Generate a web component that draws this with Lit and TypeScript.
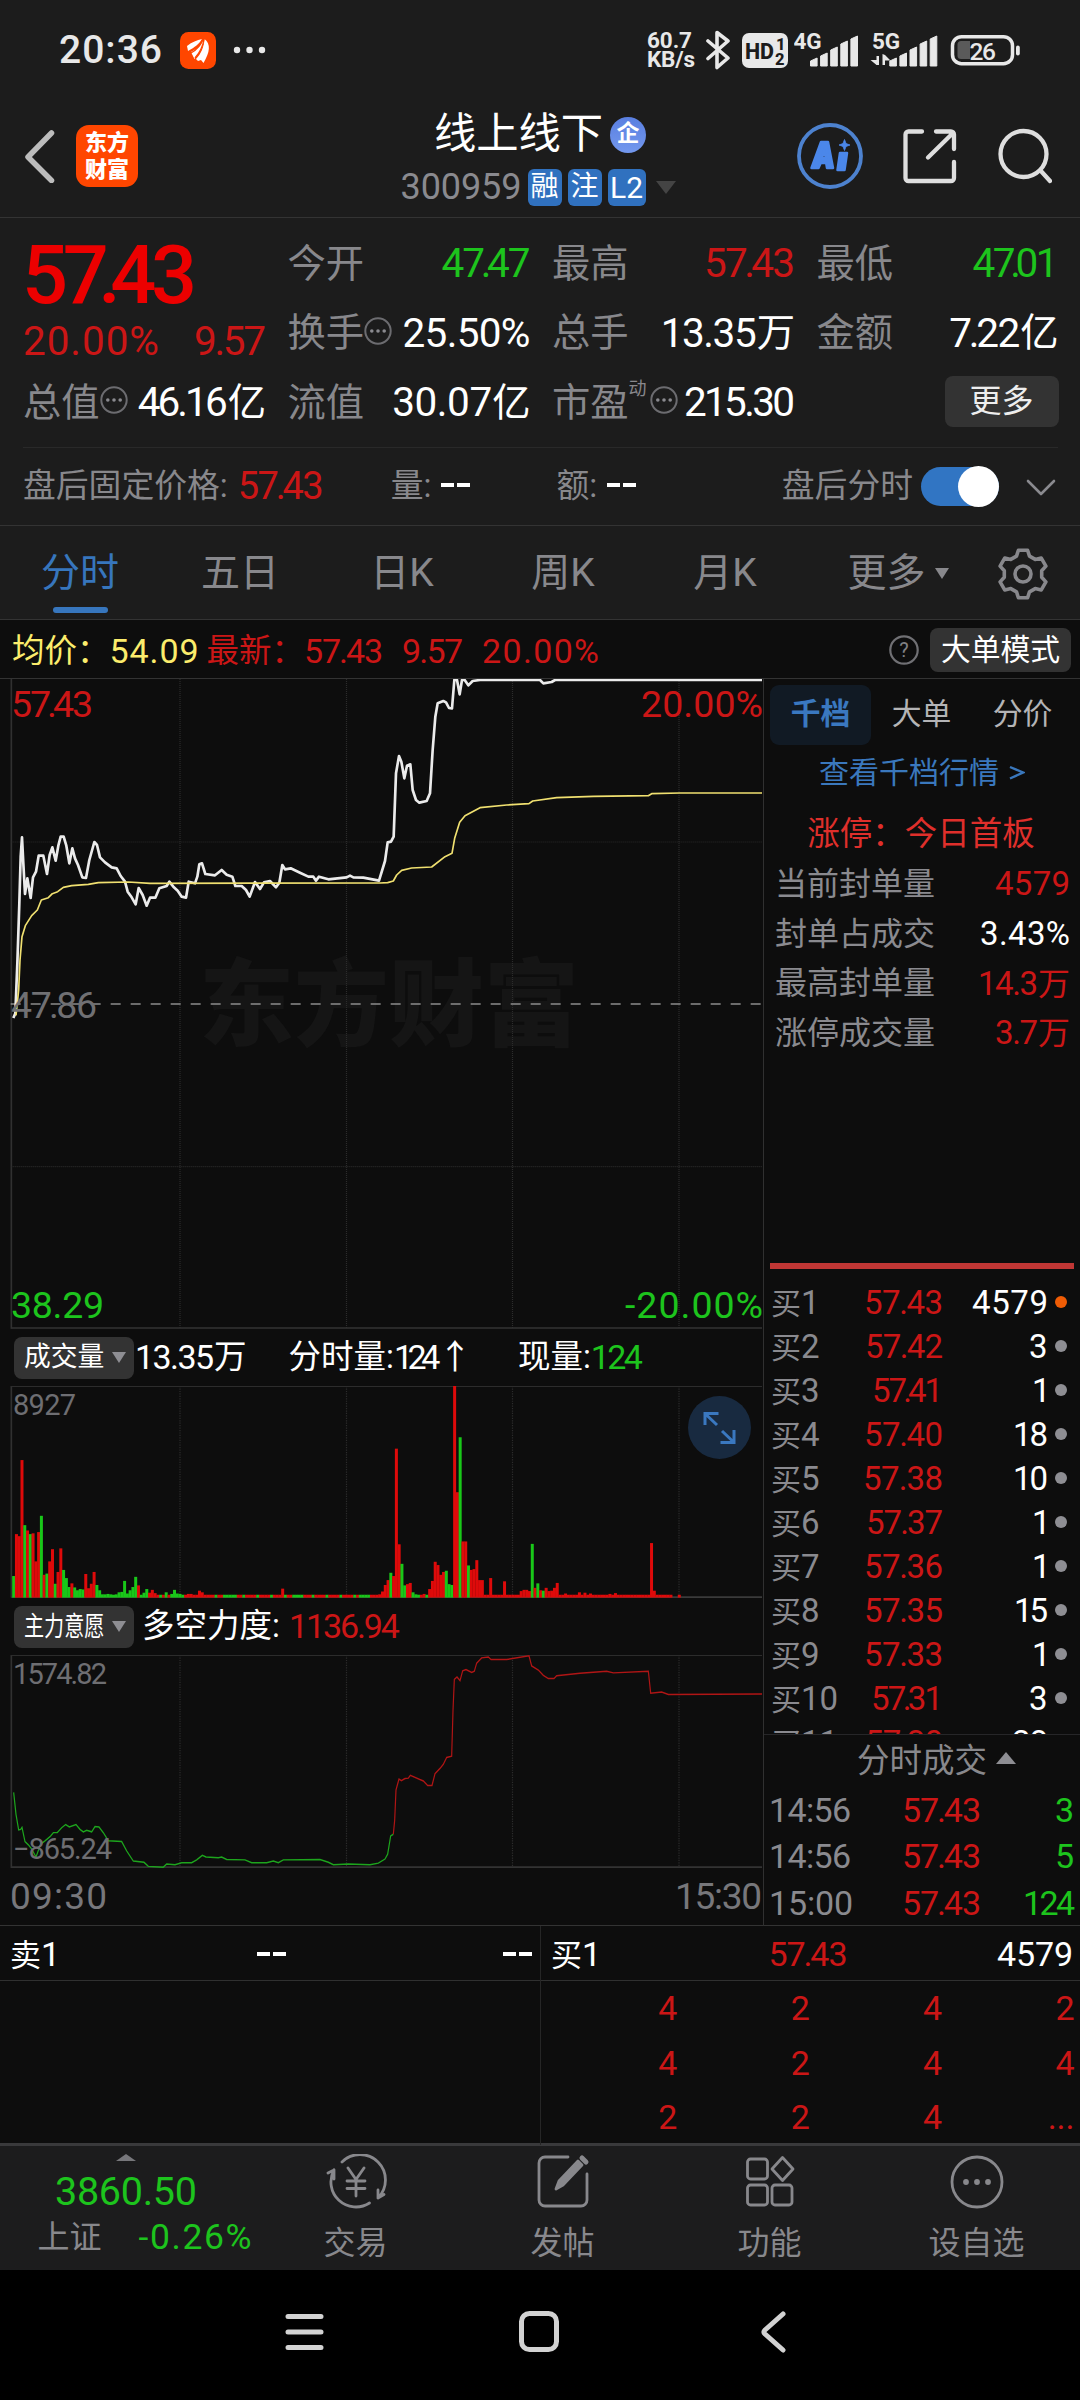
import { LitElement, html, svg, css } from "lit";
import { customElement, property, query } from "lit/decorators.js";

/** A single line of text whose glyphs are tracked to span a given width. */
@customElement("fit-text")
class FitText extends LitElement {
  @property() text = "";
  @property({ type: Number }) w = 0;
  @query(".run") run!: HTMLElement;

  static styles = css`
    :host { display: inline-block; flex: none; white-space: nowrap; text-align: left; }
    .run { display: inline-block; }
  `;

  updated() {
    const parts = Array.from(this.run.children) as HTMLElement[];
    parts.forEach((p) => (p.style.letterSpacing = "0"));
    const diff = this.w - this.run.getBoundingClientRect().width;
    const weightOf = (p: HTMLElement) => (diff < 0 && p.className === "pair" ? 2 : 1);
    let total = -1;
    parts.forEach((p) => (total += (p.textContent || "").length * weightOf(p)));
    const unit = diff / Math.max(total, 1);
    parts.forEach((p) => (p.style.letterSpacing = unit * weightOf(p) + "px"));
    this.style.width = this.w + "px";
  }

  render() {
    const i = this.text.indexOf("7.");
    return i < 0
      ? html`<span class="run"><span>${this.text}</span></span>`
      : html`<span class="run"><span>${this.text.slice(0, i)}</span><span class="pair">7.</span><span>${this.text.slice(i + 2)}</span></span>`;
  }
}

const fit = (text: string, w: number, cls = "") => html`<fit-text class=${cls} .text=${text} .w=${w}></fit-text>`;

const pts = (a: number[], dx = 0) => {
  const out: string[] = [];
  for (let i = 0; i < a.length; i += 2) out.push(a[i] + dx + "," + a[i + 1]);
  return out.join(" ");
};

const PRICE_A = [40,1044,46,1030,52,880,58,700,62,560,66,502,70,580,75,672,82,625,92,684,99,622,108,605,116,557,130,557,141,612,149,555,157,532,167,572,175,527,182,500,191,500,199,527,208,580,217,535,225,565,234,585,247,622,258,624,268,570,283,516,291,525,300,562,315,577,335,592,350,595,362,618,375,635,383,665,395,682,407,703,416,654,428,675,440,707,450,683,466,683,478,655,500,648,508,635,520,650,533,662,545,680,558,683,566,635,585,640,592,620,598,583,606,580,616,612,645,616,665,600,680,614,697,620,706,648,725,648,738,660,749,680,765,636,780,657,792,637,810,633,828,652,838,638,847,585,855,598,872,595,900,608,925,620,940,620,948,632,957,620,985,628,1040,622,1050,617,1060,622,1090,623,1137,632,1155,573,1163,517,1173,515,1181,500,1188,310];
const PRICE_B = [57,258,64,275,73,325,81,287,91,283,98,360,108,390,118,398,140,393,150,370,158,240,166,140,173,100,190,93,198,97,207,114,216,115,223,30,231,30,239,73,246,30,254,30,265,46,278,33,300,30,480,30,490,40,515,36,525,30,1146,30];
const AVG_A = [48,1036,56,960,60,870,66,800,76,767,95,737,112,720,124,690,145,683,157,671,173,665,190,652,215,647,265,643,295,638,385,636,450,640,1140,639,1163,638];
const AVG_B = [40,633,50,615,65,601,95,594,155,591,195,560,216,550,224,505,239,457,255,437,300,413,380,405,447,401,458,393,530,383,640,379,805,377,815,371,900,369,1146,369];
const WILL_G = [41,1281,48,1335,56,1373,62,1372,66,1367,75,1402,85,1410,95,1420,108,1440,122,1408,135,1400,150,1390,160,1380,172,1380,185,1368,197,1360,208,1366,228,1360,240,1372,250,1378,260,1374,275,1378,285,1365,297,1366,310,1380,325,1400,365,1402,380,1425,400,1450,432,1453,445,1463,490,1465,500,1457,525,1459,545,1454,575,1454,590,1447,607,1436,618,1440,655,1442,665,1440,680,1446,735,1447,755,1454,800,1454,820,1450,835,1454,850,1447,960,1446,985,1453,1000,1459,1045,1457,1110,1459,1135,1455,1155,1445,1163,1433,1172,1388,1180,1384];
const WILL_R = [40,1384,44,1350,48,1275,57,1248,64,1252,75,1247,85,1246,91,1239,130,1253,143,1264,156,1264,165,1235,180,1222,190,1212,200,1195,215,1192,219,1080,223,1003,231,997,240,1006,248,982,258,979,275,986,283,983,290,963,305,950,325,948,333,954,380,954,447,945,455,970,475,980,490,993,505,1001,522,1001,530,994,600,988,680,983,700,987,805,983,812,1037,845,1034,865,1040,1146,1039];

/* Volume per minute: "<minute><r|g><top>", every other minute is a minimal bar. */
const VOL = "0g750 1r647 2r652 3r465 4g625 5r638 6g647 7r645 8r714 9r642 10g602 11r747 12g744 13r714 14r684 15g769 16r740 17r682 18g735 19g755 20g777 21r768 22g778 23g785 24g782 25g783 26r745 27r780 28r769 29r740 30g772 31g785 32g795 33g795 34g794 35g795 36g796 37g795 38g790 39g789 40g762 41g793 42g785 43g777 44g752 45r773 46g796 47g791 48g782 49r791 50r784 51r792 55g790 56r796 57g794 58g784 59g793 60g794 61g796 63r794 64r794 67r786 68r790 97r781 132r795 133r788 134r772 135r760 136g742 137r750 138r437 139r672 140g720 141g773 142r770 143r767 144g790 145g795 146g796 147r796 148r794 149g796 150r782 151r762 152r715 153r723 154r747 155r740 156g737 157g770 158g772 159r283 160r544 161g409 162r665 163r665 164g724 165r735 166r733 167r711 168r760 169r760 172r755 177r763 183r787 184r784 185r784 186r787 187g671 188r779 189g768 190r785 191g786 192r779 193r787 194r786 195r779 196r767 199r793 204r790 206r791 208r793 215r794 217r792 230r669 231r786";
const bars = (() => {
  const map = new Map<number, [string, number]>();
  VOL.split(" ").forEach((s) => {
    const m = /^(\d+)([rg])(\d+)$/.exec(s)!;
    map.set(+m[1], [m[2], +m[3]]);
  });
  const list: { x: number; y: number; up: boolean }[] = [];
  for (let i = 0; i <= 240; i++) {
    if (i > 237 && i < 240) continue;
    const v = map.get(i);
    const up = v ? v[0] === "r" : i > 140 || !(i % 5 === 3 || (i > 75 && i < 81) || (i > 100 && i < 105) || (i > 124 && i < 129));
    list.push({ x: 36.5 + 8.32 * i, y: v ? v[1] : 796, up });
  }
  return list;
})();

const gear = (() => {
  const p: string[] = [];
  for (let k = 0; k < 6; k++)
    for (const [d, r] of [[-20, 19], [-11, 24.2], [11, 24.2], [20, 19]]) {
      const a = ((k * 60 + d) * Math.PI) / 180;
      p.push((26 + r * Math.sin(a)).toFixed(1) + "," + (26 - r * Math.cos(a)).toFixed(1));
    }
  return p.join(" ");
})();

const dotsIcon = html`<svg class="dots" width="28" height="28" viewBox="0 0 28 28"><circle cx="14" cy="14" r="12.7" fill="none" stroke="#6c6c70" stroke-width="2"/><circle cx="7.8" cy="14" r="1.8"/><circle cx="14" cy="14" r="1.8"/><circle cx="20.2" cy="14" r="1.8"/></svg>`;

const BIDS: [string, string, number, string, number][] = [
  ["买1", "57.43", 79, "4579", 76], ["买2", "57.42", 78, "3", 19], ["买3", "57.41", 71, "1", 16],
  ["买4", "57.40", 79, "18", 35], ["买5", "57.38", 80, "10", 35], ["买6", "57.37", 77, "1", 16],
  ["买7", "57.36", 79, "1", 16], ["买8", "57.35", 79, "15", 34], ["买9", "57.33", 79, "1", 16],
  ["买10", "57.31", 72, "3", 19], ["买11", "57.30", 78, "28", 36],
];

@customElement("app-root")
class AppRoot extends LitElement {
  static styles = css`
    :host { display: block; width: 1080px; height: 2400px; overflow: hidden; background: #0d0d0d; color: #fff;
      font-family: Roboto, "Noto Sans CJK SC", sans-serif; font-size: 33px; line-height: 1.2; }
    * { box-sizing: border-box; }
    svg { display: block; flex: none; }
    .g { color: #8a8a8f; } .red { color: #cb1616; } .green { color: #1dc41d; } .w { color: #fff; } .yel { color: #fbec6c; } .blue { color: #3a78bd; }
    .top { background: #1c1c1c; }
    .status { height: 104px; display: flex; align-items: flex-start; justify-content: space-between; padding: 0 60px 0 59px; }
    .st-left { display: flex; align-items: center; height: 100px; color: #e8e8e8; }
    .clock { font-size: 39px; font-weight: 500; margin-right: 18px; padding-top: 1px; }
    .st-left svg + svg { margin-left: 17px; }
    .st-right { display: flex; align-items: center; height: 100px; color: #e8e8e8; }
    .speed { display: flex; flex-direction: column; font-size: 22.5px; line-height: 19px; font-weight: 700; width: 50px; margin-right: 9px; }
    .hd { margin: 0 6px 0 12px; }
    .header { height: 113px; display: grid; grid-template-columns: 1fr auto 1fr; }
    .h-left { display: flex; align-items: center; height: 104px; padding-left: 22px; }
    .logo { width: 62px; height: 62px; border-radius: 13px; background: #ff4600; margin-left: 20px; font-weight: 900; font-size: 22px; line-height: 27px; display: flex; flex-direction: column; align-items: center; justify-content: center; }
    .h-mid { display: flex; flex-direction: column; align-items: center; padding-top: 1.5px; }
    .title { display: flex; align-items: center; height: 58px; font-size: 42.3px; }
    .badge { width: 36px; height: 36px; border-radius: 50%; background: linear-gradient(#5a7fe0, #7398ee); font-size: 23px; font-weight: 700; display: flex; align-items: center; justify-content: center; margin-left: 7px; padding-bottom: 1px; }
    .code { display: flex; align-items: center; height: 48px; font-size: 36px; margin-right: 4px; }
    .chip { height: 37px; border-radius: 6px; background: #3071bf; color: #fff; font-size: 28px; line-height: 36px; text-align: center; margin-left: 6px; width: 34px; }
    .chip.l2 { width: 38px; font-size: 30px; line-height: 38px; }
    .tri { width: 0; height: 0; border: 10px solid transparent; border-bottom: 0; border-top: 13px solid #444; margin-left: 10px; }
    .h-right { display: flex; align-items: center; justify-content: flex-end; height: 104px; padding-right: 28px; }
    .share { margin: 0 40px 0 39px; }
    .quote { border-top: 1.5px solid #333; height: 308px; padding: 10px 22px 0 23px; }
    .grid { display: grid; grid-template-columns: repeat(3, 243px) 242px; column-gap: 21.5px; grid-auto-rows: 69.5px; }
    .cell { display: flex; align-items: center; font-size: 38.3px; padding-top: 1.5px; }
    .cell .lab, .after .g { color: #88888c; }
    .cell .val, .cell fit-text { margin-left: auto; }
    .cell fit-text { font-size: 40.5px; }
    .big { grid-row: span 2; display: flex; flex-direction: column; }
    .big .price { font-size: 81px; font-weight: 500; color: #ec0000; height: 84px; line-height: 95px; margin-left: -1px; }
    .pct { display: flex; justify-content: space-between; font-size: 40.5px; height: 64px; align-items: center; margin-top: 3px; }
    .dots { margin-bottom: 5px; fill: #8a8a8f; }
    .sup { font-size: 18px; align-self: flex-start; margin-top: 9px; margin-right: 2px; color: #88888c; width: 19px; }
    .btn { background: #333; border-radius: 8px; color: #fff; display: flex; align-items: center; justify-content: center; }
    .more { width: 114px; height: 51px; margin-left: auto; font-size: 32px; color: #eee; margin-bottom: 2px; }
    .after { border-top: 1.5px solid #292929; display: flex; align-items: center; height: 79px; font-size: 32.8px; margin-top: 10px; padding-right: 2px; }
    .after fit-text { font-size: 38px; }
    .dash { display: inline-flex; gap: 3px; } .dash i { width: 13px; height: 3.5px; background: #fff; }
    .a1 { margin-left: 10px; } .a2 { margin-left: 67px; } .a3 { margin-left: 86px; } .a4 { margin-left: auto; } .dash.d { margin-left: 10px; margin-bottom: 3px; }
    .toggle { width: 78px; height: 39px; border-radius: 20px; background: #3175c3; margin: 0 27px 0 8px; display: flex; justify-content: flex-end; align-items: center; }
    .toggle i { width: 41px; height: 41px; border-radius: 50%; background: #fff; }
    .tabs { border-top: 1.5px solid #333; border-bottom: 1.5px solid #333; height: 95px; display: grid; grid-template-columns: 160px 160px 164px 158px 166px 180px 70px; font-size: 39px; color: #88888c; }
    .tab { display: flex; align-items: center; justify-content: center; position: relative; padding-top: 2px; }
    .tab.on { color: #3776bd; }
    .tab.on::after { content: ""; position: absolute; left: 53px; bottom: 6px; width: 55px; height: 6px; border-radius: 3px; background: #3776bd; }
    .tab .t { border: 7px solid transparent; border-bottom: 0; border-top: 11px solid #88888c; margin-left: 9px; }
    .info { height: 58px; display: flex; align-items: center; padding: 5px 9px 0 12px; font-size: 32.5px; }
    .info fit-text { font-size: 34px; }
    .q { margin-left: auto; margin-bottom: 3px; }
    .mode { width: 141px; height: 44px; font-size: 29.8px; margin-left: 11px; margin-bottom: 4px; }
    .body { display: grid; grid-template-columns: 764px 316px; height: 1247px; border-top: 1.5px solid #333; }
    .left { border-right: 1.5px solid #303030; }
    .plot { position: relative; }
    .plot.p1 { height: 650px; } .plot.p2 { height: 212px; } .plot.p3 { height: 213px; }
    .plot .lines { position: relative; }
    .over { position: absolute; line-height: 34px; }
    .tl { left: 11px; top: 8px; } .tr { right: 0; top: 8px; } .ml { left: 11px; top: 309px; color: #707073; } .bl { left: 11px; bottom: 7px; } .br { right: 0; bottom: 7px; }
    .p1 .over { font-size: 37.5px; }
    .mark { position: absolute; left: 199px; top: 253px; font-size: 95px; font-weight: 900; line-height: 150px; color: #151515; }
    .p2 .over, .p3 .over { font-size: 29px; color: #6e6e72; }
    .v1 { left: 13px; top: 2px; } .v2 { left: 13px; bottom: 2px; }
    .expand { position: absolute; left: 688px; top: 10px; }
    .sub { height: 57px; display: flex; align-items: center; padding-left: 14px; font-size: 32.5px; }
    .sub fit-text { font-size: 34px; }
    .pick { width: 120px; height: 42px; font-size: 26.8px; justify-content: flex-start; padding-left: 10px; }
    .pick .cond { display: inline-block; width: 80px; }
    .pick .cond b { display: inline-block; font-weight: 400; font-size: 27.5px; transform: scaleX(.73); transform-origin: left; white-space: nowrap; }
    .pick .t { border: 7px solid transparent; border-bottom: 0; border-top: 11px solid #8e8e93; margin-left: 8px; }
    .time { height: 57px; display: flex; justify-content: space-between; align-items: center; padding: 2px 1px 0 10px; font-size: 37px; color: #77777b; }
    .side { display: flex; flex-direction: column; }
    .stabs { display: flex; margin: 6px 0 0 6px; height: 60px; font-size: 29.8px; color: #b4b4b6; }
    .stabs div { width: 101px; display: flex; align-items: center; justify-content: center; padding-bottom: 2px; }
    .stabs .on { background: #111a24; border-radius: 9px; color: #3a78c0; font-weight: 700; }
    .link { height: 56px; display: flex; align-items: center; justify-content: center; font-size: 30px; color: #3a78bd; gap: 10px; }
    .limit { margin-top: 8px; height: 50px; line-height: 50px; text-align: center; font-size: 32.5px; color: #df2f2b; padding-right: 2px; }
    .stat { height: 49.8px; display: flex; align-items: center; justify-content: space-between; padding: 0 10px 0 11px; font-size: 32px; }
    .stat .v { font-size: 33px; }
    .line { height: 6px; margin: 205px 6px 0 6px; background: #c03735; }
    .bids { height: 465px; padding-top: 12px; overflow: hidden; }
    .bid { height: 44px; display: flex; align-items: center; padding-left: 7px; font-size: 33px; }
    .bid .lab { width: 77px; white-space: nowrap; color: #8a8a8f; } .bid .lab i { font-style: normal; font-size: 30px; }
    .bid .p { width: 95px; text-align: right; } .bid .n { width: 105px; text-align: right; }
    .bid .dot { width: 12px; height: 12px; border-radius: 50%; background: #8e8e93; margin-left: 7px; margin-bottom: 3px; }
    .bid .dot.hot { background: #ef5c05; }
    .ph { height: 53px; border-top: 1.5px solid #262628; display: flex; align-items: center; justify-content: center; font-size: 32.5px; color: #88888c; padding-left: 29px; }
    .ph i { border: 10px solid transparent; border-top: 0; border-bottom: 12px solid #8e8e93; margin-left: 9px; margin-bottom: 6px; }
    .trade { height: 46.4px; display: grid; grid-template-columns: 86px 126px 1fr; align-items: center; text-align: right; padding: 0 5px 0 5px; font-size: 34px; }
    .trade .g { text-align: left; }
    .book { border-top: 1.5px solid #333; height: 221px; display: grid; grid-template-columns: 540px 540px; border-bottom: 3px solid #39393b; }
    .half + .half { border-left: 1.5px solid #262626; }
    .bh { height: 55px; border-bottom: 1.5px solid #303030; display: grid; grid-template-columns: 1fr 1fr 1fr; padding: 2px 8px 0 10px; align-items: center; font-size: 34px; }
    .bh > :nth-child(2) { justify-self: center; } .bh > :nth-child(3) { justify-self: end; }
    .bh .c { font-size: 31px; }
    .half + .half .bh > :nth-child(2) { margin-right: 7px; }
    .half + .half .bh > :nth-child(3) { margin-right: -1px; }
    .queue { display: grid; grid-template-columns: repeat(4, 132.4px); grid-auto-rows: 54.7px; align-items: center; text-align: right; font-size: 34px; margin-left: 4px; }
    .foot { height: 124px; background: #1c1c1d; display: grid; grid-template-columns: 252px repeat(4, 207px); }
    .idx { display: flex; flex-direction: column; align-items: center; }
    .idx .up { border: 10px solid transparent; border-top: 0; border-bottom: 7px solid #77777b; margin-top: 8px; }
    .idx .n { font-size: 39.5px; line-height: 56px; margin-top: 3px; }
    .idx .r { display: flex; align-items: center; justify-content: space-between; width: 214px; margin: -3px 0 0 37px; line-height: 40px; font-size: 32px; color: #88888c; }
    .idx .r fit-text { font-size: 35.5px; }
    .act { display: flex; flex-direction: column; align-items: center; font-size: 32px; line-height: 44px; color: #88888c; padding-top: 8px; }
    .act svg { margin-bottom: 11px; }
    .nav { height: 130px; background: #000; display: flex; align-items: center; justify-content: center; padding: 0 31px 7px 0; }
  `;

  cell(label: string, value: unknown, icon: unknown = "") {
    return html`<div class="cell"><span class="lab">${label}</span>${icon}${value}</div>`;
  }

  grid(y0: number, y1: number) {
    return svg`${[540, 1039.5, 1537.5, 2037].map((x) => svg`<line x1=${x} x2=${x} y1=${y0} y2=${y1} stroke="#2c2c2c" stroke-width="3.6" stroke-dasharray="3 3"/>`)}<line x1="34" x2="34" y1=${y0} y2=${y1} stroke="#303030" stroke-width="5"/>`;
  }

  statusBar() {
    const sig = (x: number) => [58, 53, 47, 41, 36].map((y, i) => svg`<path d=${`M${x + i * 10.1} 66V${y + 3}l6.6-3V66z`} stroke="#e8e8e8" stroke-width="1" stroke-linejoin="round"/>`);
    return html`<div class="status">
      <div class="st-left">
        ${fit("20:36", 103, "clock")}
        <svg width="36" height="37" viewBox="0 0 36 37"><rect width="36" height="37" rx="8.5" fill="#ff4600"/><g fill="#fff"><path d="M7 14c5-4 10-6 15-7-3 5-7 8-14 12z"/><path d="M11 20c6-3 10-7 12.500-13 .6 6-3 12-9 20z" /><path d="M16 27c5-5 8-12 8.500-20C31 12 30 20 23.500 31l-2.500-3-3 1z"/></g><path d="M23 7c-2 6-5 10-12 14M24 7c-1 7-3 12-9 19" fill="none" stroke="#ff4600" stroke-width="1.300"/></svg>
        <svg width="34" height="8" viewBox="0 0 34 8" fill="#e8e8e8"><circle cx="4" cy="4" r="3.200"/><circle cx="16.500" cy="4" r="3.200"/><circle cx="29" cy="4" r="3.200"/></svg>
      </div>
      <div class="st-right">
        <div class="speed">${fit("60.7", 45)}${fit("KB/s", 48)}</div>
        <svg width="24" height="40" viewBox="0 0 24 40" fill="none" stroke="#e8e8e8" stroke-width="3.600" stroke-linejoin="round" stroke-linecap="round"><path d="M2 11l20 17-11 9.500v-35L22 11 2 28.500"/></svg>
        <svg class="hd" width="46" height="35" viewBox="0 0 46 35"><rect width="46" height="35" rx="7" fill="#e8e8e8"/><g fill="#1c1c1c" font-family="Roboto" font-weight="800"><text x="3" y="25.500" font-size="21.500" textLength="29">HD</text><text x="34" y="16.500" font-size="16.500">1</text><text x="33" y="31.500" font-size="16.500">2</text></g></svg>
        <svg width="226" height="100" viewBox="794 0 226 100" fill="#e8e8e8" font-family="Roboto" font-weight="700">
          <text x="793.500" y="48.500" font-size="22.500" textLength="28">4G</text>${sig(810.5)}
          <text x="872" y="48.500" font-size="22.500" textLength="28">5G</text>${sig(889.8)}
          <path d="M876.500 65V56h2.500v9h-2.500l-6-5h6zM885 55l5.500 5.500H885V65h-2.500V54z" />
          <rect x="952.500" y="36.700" width="60" height="27" rx="9" fill="none" stroke="#e8e8e8" stroke-width="3.500"/>
          <path d="M961 41h9v18h-9a3.500 3.500 0 0 1-3.500-3.500v-11A3.500 3.500 0 0 1 961 41z" fill="#5a5a5a"/>
          <rect x="1016" y="45.500" width="3.800" height="10" rx="1.900"/><text x="969.500" y="59.500" font-size="24.500" font-weight="500" textLength="26.500">26</text>
        </svg>
      </div>
    </div>`;
  }

  header() {
    return html`<div class="header">
      <div class="h-left">
        <svg width="34" height="54" viewBox="0 0 34 54" fill="none" stroke="#bcbcbc" stroke-width="5.500" stroke-linecap="round" stroke-linejoin="round"><path d="M29.500 4L6 28l23.500 23.500"/></svg>
        <div class="logo"><span>东方</span><span>财富</span></div>
      </div>
      <div class="h-mid">
        <div class="title">线上线下<span class="badge">企</span></div>
        <div class="code g">${fit("300959", 121)}<span class="chip">融</span><span class="chip">注</span><span class="chip l2">${fit("L2", 33)}</span><i class="tri"></i></div>
      </div>
      <div class="h-right">
        <svg width="66" height="68" viewBox="0 0 66 68"><circle cx="33" cy="34" r="31" fill="none" stroke="#4d82cf" stroke-width="3.800"/><g fill="#4b87ea" stroke="#4b87ea" stroke-width="2.500" stroke-linejoin="round"><path fill-rule="evenodd" d="M24 20h7l5 26h-6l-.8-5h-5.500l-2.200 5h-7zM27 28l-2 8h4z"/><path d="M43 31h7l-2.500 17h-7z"/><path stroke-width=".8" d="M47.500 17.500l1.500 4 4 1.500-4 1.500-1.500 4-1.500-4-4-1.500 4-1.500z"/></g></svg>
        <svg class="share" width="56" height="58" viewBox="0 0 56 58" fill="none" stroke="#dedede" stroke-width="4.300" stroke-linecap="round" stroke-linejoin="round"><path d="M20 4.500H6.500a3 3 0 0 0-3 3V51a3 3 0 0 0 3 3H49a3 3 0 0 0 3-3V35M34 4.500h15a3 3 0 0 1 3 3V22M51 6L26 30.500"/></svg>
        <svg width="54" height="56" viewBox="0 0 54 56" fill="none" stroke="#dedede" stroke-width="4.300" stroke-linecap="round"><circle cx="25.500" cy="26" r="23"/><path d="M42.500 42.500l9.500 10.500"/></svg>
      </div>
    </div>`;
  }

  quote() {
    const dash = html`<span class="dash d"><i></i><i></i></span>`;
    return html`<div class="quote">
      <div class="grid">
        <div class="big">${fit("57.43", 175, "price")}<div class="pct red">${fit("20.00%", 136)}${fit("9.57", 72)}</div></div>
        ${this.cell("今开", fit("47.47", 89, "green"))}
        ${this.cell("最高", fit("57.43", 91, "red"))}
        ${this.cell("最低", fit("47.01", 86, "green"))}
        ${this.cell("换手", fit("25.50%", 128), dotsIcon)}
        ${this.cell("总手", html`${fit("13.35", 96)}万`)}
        ${this.cell("金额", html`${fit("7.22", 71)}亿`)}
        ${this.cell("总值", html`${fit("46.16", 90)}亿`, dotsIcon)}
        ${this.cell("流值", html`${fit("30.07", 100)}亿`)}
        ${this.cell("市盈", fit("215.30", 111), html`<span class="sup">动</span>${dotsIcon}`)}
        <div class="cell"><span class="btn more">更多</span></div>
      </div>
      <div class="after">
        <span class="g">盘后固定价格:</span>${fit("57.43", 86, "a1 red")}
        <span class="g a2">量:</span>${dash}
        <span class="g a3">额:</span>${dash}
        <span class="g a4">盘后分时</span><span class="toggle"><i></i></span>
        <svg width="30" height="18" viewBox="0 0 30 18" fill="none" stroke="#8a8a8f" stroke-width="2.600" stroke-linecap="round" stroke-linejoin="round"><path d="M2 3l13 13L28 3"/></svg>
      </div>
    </div>`;
  }

  leftPane() {
    return html`<div class="left">
      <div class="plot p1">
        <div class="mark">东方财富</div>
        <svg class="lines" width="763" height="650" viewBox="0 27 2289 1950">
          ${this.grid(27, 1976)}
          ${[516, 1490].map((y) => svg`<line x1="34" x2="2286" y1=${y} y2=${y} stroke="#2c2c2c" stroke-width="3.600" stroke-dasharray="3 3"/>`)}
          <line x1="34" x2="2286" y1="1974" y2="1974" stroke="#333" stroke-width="5"/>
          <line x1="32" x2="2286" y1="1002" y2="1002" stroke="#8c8c8c" stroke-width="5" stroke-dasharray="30 30"/>
          <polyline points=${pts(PRICE_A) + " " + pts(PRICE_B, 1140)} fill="none" stroke="#ebebeb" stroke-width="8" stroke-linejoin="round"/>
          <polyline points=${pts(AVG_A) + " " + pts(AVG_B, 1140)} fill="none" stroke="#f0e070" stroke-width="5" stroke-linejoin="round"/>
        </svg>
        ${fit("57.43", 82, "over tl red")}${fit("20.00%", 122, "over tr red")}
        ${fit("47.86", 86, "over ml")}
        ${fit("38.29", 93, "over bl green")}${fit("-20.00%", 138, "over br green")}
      </div>
      <div class="sub"><span class="btn pick">成交量<i class="t"></i></span><span style="margin-left:1px"></span>${fit("13.35", 79)}<span>万</span><span style="margin-left:42px">分时量:</span>${fit("124 ↑", 78)}<span style="margin-left:46px">现量:</span>${fit("124", 52, "green")}</div>
      <div class="plot p2">
        <svg class="lines" width="763" height="212" viewBox="0 283 2289 521" preserveAspectRatio="none">
          ${this.grid(283, 803)}
          <line x1="34" x2="2286" y1="284" y2="284" stroke="#2c2c2c" stroke-width="3"/><line x1="34" x2="2286" y1="802" y2="802" stroke="#3a3a3a" stroke-width="4"/>
          ${bars.map((b) => svg`<rect x=${b.x} y=${b.y} width="9" height=${803 - b.y} fill=${b.up ? "#de0a0a" : "#19c719"}/>`)}
        </svg>
        ${fit("8927", 63, "over v1")}
        <svg class="expand" width="63" height="63" viewBox="0 0 63 63"><circle cx="31.500" cy="31.500" r="31.500" fill="#182a40"/><path d="M17 29V17.500h13.500M18 18.500L29 29M46 34v12.500H32.500M45 45.500L34 35" fill="none" stroke="#3a78c0" stroke-width="3"/></svg>
      </div>
      <div class="sub"><span class="btn pick"><span class="cond"><b>主力意愿</b></span><i class="t"></i></span><span style="margin-left:8px">多空力度:</span><span style="margin-left:9px"></span>${fit("1136.94", 111, "red")}</div>
      <div class="plot p3">
        <svg class="lines" width="763" height="213" viewBox="0 943 2289 524" preserveAspectRatio="none">
          ${this.grid(943, 1467)}
          <line x1="34" x2="2286" y1="944" y2="944" stroke="#2c2c2c" stroke-width="3"/><line x1="34" x2="2286" y1="1465" y2="1465" stroke="#333" stroke-width="4"/>
          <polyline points=${pts(WILL_G)} fill="none" stroke="#1da51d" stroke-width="3.600"/>
          <polyline points=${pts(WILL_R, 1140)} fill="none" stroke="#b01515" stroke-width="3.600"/>
        </svg>
        ${fit("1574.82", 94, "over v1")}${fit("−865.24", 99, "over v2")}
      </div>
      <div class="time">${fit("09:30", 97)}${fit("15:30", 87)}</div>
    </div>`;
  }

  sidePane() {
    return html`<div class="side">
      <div class="stabs"><div class="on">千档</div><div>大单</div><div>分价</div></div>
      <div class="link"><span>查看千档行情</span><svg width="16" height="16" viewBox="0 0 16 16" fill="none" stroke="#3a78bd" stroke-width="2.400"><path d="M1 2l13 5.500L1 13.500"/></svg></div>
      <div class="limit">涨停：今日首板</div>
      ${[["当前封单量", fit("4579", 75, "v red")], ["封单占成交", fit("3.43%", 90, "v w")], ["最高封单量", html`<span class="red">${fit("14.3", 60, "v")}万</span>`], ["涨停成交量", html`<span class="red">${fit("3.7", 43, "v")}万</span>`]].map(([a, b]) => html`<div class="stat"><span class="g">${a}</span>${b}</div>`)}
      <div class="line"></div>
      <div class="bids">${BIDS.map(([l, p, pw, n, nw], i) => html`<div class="bid"><span class="lab"><i>${l[0]}</i>${l.slice(1)}</span><span class="p red">${fit(p, pw)}</span><span class="n">${fit(n, nw)}</span><span class="dot ${i ? "" : "hot"}"></span></div>`)}</div>
      <div class="ph">分时成交<i></i></div>
      ${[["14:56", 82, "3", 20], ["14:56", 82, "5", 20], ["15:00", 84, "124", 52]].map(([t, tw, n, nw]) => html`<div class="trade"><span class="g">${fit(t as string, tw as number)}</span><span class="red">${fit("57.43", 79)}</span><span class="green">${fit(n as string, nw as number)}</span></div>`)}
    </div>`;
  }

  footer() {
    const s = (body: unknown) => html`<svg width="62" height="56" viewBox="0 0 62 56" fill="none" stroke="#88888c" stroke-width="2.800" stroke-linecap="round" stroke-linejoin="round">${body}</svg>`;
    return html`<div class="foot">
      <div class="idx"><i class="up"></i><div class="n green">${fit("3860.50", 142)}</div><div class="r"><span>上证</span>${fit("-0.26%", 113, "green")}</div></div>
      <div class="act">${s(svg`<path d="M17 8a25 25 0 0 1 36 36M44.500 49A25 25 0 0 1 9 16M9 16l-6 3M53 44l6-3.500M9 16v9M53 44v-8M23 14l8 11.500L39 14M31 25.500V42M22 27h18M22 34.500h18"/>`)}交易</div>
      <div class="act">${s(svg`<path d="M36 3H13a6 6 0 0 0-6 6v37a6 6 0 0 0 6 6h36a6 6 0 0 0 6-6V20"/><path d="M24 35l3-8L46 7l4 4-19 20z" fill="#88888c"/><path d="M50 4l4 4" stroke-width="5"/>`)}发帖</div>
      <div class="act">${s(svg`<rect x="8.500" y="5" width="20" height="20" rx="3"/><rect x="8.500" y="31" width="20" height="20" rx="3"/><rect x="33" y="31" width="20" height="20" rx="3"/><path d="M43.500 3.500L54 15 43.500 26.500 33 15z"/>`)}功能</div>
      <div class="act">${s(svg`<circle cx="31" cy="28" r="25"/><g fill="#88888c" stroke="none"><circle cx="20" cy="28" r="2.900"/><circle cx="31" cy="28" r="2.900"/><circle cx="42" cy="28" r="2.900"/></g>`)}设自选</div>
    </div>`;
  }

  render() {
    const d = html`<span class="dash"><i></i><i></i></span>`;
    return html`
      <div class="top">
        ${this.statusBar()}${this.header()}${this.quote()}
        <div class="tabs">
          <div class="tab on">分时</div><div class="tab">五日</div><div class="tab">日K</div><div class="tab">周K</div><div class="tab">月K</div>
          <div class="tab">更多<i class="t"></i></div>
          <div class="tab"><svg width="52" height="52" viewBox="0 0 52 52" fill="none" stroke="#88888c" stroke-width="3.600" stroke-linejoin="round"><polygon points=${gear}/><circle cx="26" cy="26" r="8"/></svg></div>
        </div>
      </div>
      <div class="info">
        <span class="yel">均价：</span>${fit("54.09", 89, "yel")}<span class="red" style="margin-left:8px">最新：</span>${fit("57.43", 79, "red")}<span style="margin-left:19px"></span>${fit("9.57", 61, "red")}<span style="margin-left:19px"></span>${fit("20.00%", 117, "red")}
        <svg class="q" width="30" height="30" viewBox="0 0 30 30"><circle cx="15" cy="15" r="13.700" fill="none" stroke="#707074" stroke-width="2.200"/><text x="15" y="22" font-size="20" fill="#808084" text-anchor="middle" font-family="Roboto">?</text></svg>
        <span class="btn mode">大单模式</span>
      </div>
      <div class="body">${this.leftPane()}${this.sidePane()}</div>
      <div class="book">
        <div class="half"><div class="bh"><span><span class="c">卖</span>1</span>${d}${d}</div></div>
        <div class="half"><div class="bh"><span><span class="c">买</span>1</span>${fit("57.43", 79, "red")}${fit("4579", 76)}</div>
          <div class="queue red">${["4", "2", "4", "2", "4", "2", "4", "4", "2", "2", "4", "..."].map((n) => html`<span>${n}</span>`)}</div></div>
      </div>
      ${this.footer()}
      <div class="nav"><svg width="540" height="44" viewBox="255 0 540 44" fill="none" stroke="#d2d2d2" stroke-width="5" stroke-linecap="round" stroke-linejoin="round"><path d="M288 6.500h33M288 22h33M288 37.500h33"/><rect x="521.500" y="3.500" width="35" height="36" rx="8"/><path d="M783 4l-18 16q-2 2 0 4l18 16"/></svg></div>
    `;
  }
}
